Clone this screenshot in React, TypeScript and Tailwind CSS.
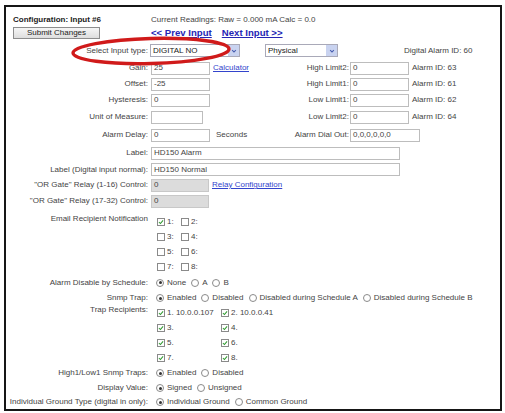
import type { ReactNode } from 'react';

/**
 * Pantalla de configuración de una entrada (Input #6) de un equipo de alarmas,
 * con el marco negro de la captura y la elipse roja que resalta "Select Input type".
 */

function TextBox({ value = '', w, gray = false }: { value?: string; w: string; gray?: boolean }) {
  return (
    <span
      className={`inline-flex h-[13px] items-center border px-[2px] text-[8px] leading-none ${w} ${
        gray ? 'border-[#c8c8c8] bg-[#dcdcdc]' : 'border-[#bdbdbd] bg-white'
      }`}
    >
      {value}
    </span>
  );
}

function Select({ value, w }: { value: string; w: string }) {
  return (
    <span className={`inline-flex h-[13px] items-center justify-between border border-[#a9a9b8] bg-white pl-[2px] ${w}`}>
      <span className="text-[8px] leading-none text-[#222]">{value}</span>
      <span className="flex h-[11px] w-[11px] items-center justify-center bg-[#c9d3f0]">
        <svg viewBox="0 0 8 8" className="h-[6px] w-[6px]">
          <path d="M1.5 2.8 L4 5.2 L6.5 2.8" fill="none" stroke="#4a5fb0" strokeWidth="1.4" />
        </svg>
      </span>
    </span>
  );
}

function Check({ on = false }: { on?: boolean }) {
  return (
    <span className="inline-flex h-[8px] w-[8px] shrink-0 items-center justify-center border border-[#8a8a8a] bg-white">
      {on && (
        <svg viewBox="0 0 8 8" className="h-[6px] w-[6px]">
          <path d="M1.2 4 L3.2 6 L6.8 1.8" fill="none" stroke="#2f9a2f" strokeWidth="1.4" />
        </svg>
      )}
    </span>
  );
}

function Radio({ on = false }: { on?: boolean }) {
  return (
    <span className="inline-flex h-[8px] w-[8px] shrink-0 items-center justify-center rounded-full border border-[#8a8a8a] bg-white">
      {on && <span className="h-[3px] w-[3px] rounded-full bg-[#333]" />}
    </span>
  );
}

function Row({ label, h, children }: { label: string; h: string; children: ReactNode }) {
  return (
    <div className={`flex items-center ${h}`}>
      <div className="w-[142px] shrink-0 whitespace-nowrap text-right">{label}</div>
      <div className="flex items-center pl-[3px]">{children}</div>
    </div>
  );
}

function PairRow({
  label,
  h,
  left,
  rightLabel,
  right,
}: {
  label: string;
  h: string;
  left: ReactNode;
  rightLabel: string;
  right: ReactNode;
}) {
  return (
    <div className={`flex items-center ${h}`}>
      <div className="w-[142px] shrink-0 whitespace-nowrap text-right">{label}</div>
      <div className="flex w-[142px] shrink-0 items-center pl-[3px]">{left}</div>
      <div className="w-[59px] shrink-0 whitespace-nowrap text-right">{rightLabel}</div>
      <div className="flex items-center pl-[1px]">{right}</div>
    </div>
  );
}

function Options({ items, selected }: { items: string[]; selected: number }) {
  return (
    <div className="flex items-center gap-[5px] pl-[5px]">
      {items.map((t, i) => (
        <span key={t} className="flex items-center gap-[3px] whitespace-nowrap">
          <Radio on={i === selected} />
          {t}
        </span>
      ))}
    </div>
  );
}

function CalcLink({ children }: { children: ReactNode }) {
  return <span className="text-[#3344cc] underline">{children}</span>;
}

export default function App() {
  const email = [
    ['1:', '2:'],
    ['3:', '4:'],
    ['5:', '6:'],
    ['7:', '8:'],
  ];
  const traps = [
    ['1. 10.0.0.107', '2. 10.0.0.41'],
    ['3.', '4.'],
    ['5.', '6.'],
    ['7.', '8.'],
  ];

  return (
    <div className="h-[413px] w-[505px] bg-white pl-[4px] pt-[5px] font-['Liberation_Sans',Arial,sans-serif] text-[8px] leading-none text-[#444]">
      <div className="relative h-[406px] w-[498px] border-2 border-[#161616] pt-[6px]">
        {/* Cabecera */}
        <div className="flex h-[14px] items-center">
          <div className="w-[142px] pl-[7px] font-bold text-[#222]">Configuration: Input #6</div>
          <div className="pl-[3px]">Current Readings: Raw = 0.000 mA Calc = 0.0</div>
        </div>
        <div className="flex h-[14px] items-start">
          <div className="w-[142px] pl-[7px]">
            <span className="flex h-[12px] w-[87px] items-center justify-center border border-[#8d8d8d] bg-gradient-to-b from-[#f6f6f6] to-[#dedede] text-[#222]">
              Submit Changes
            </span>
          </div>
          <div className="flex gap-[10px] pl-[3px] pt-[1px] text-[9.6px] font-bold text-[#2424b4] underline">
            <span>&lt;&lt; Prev Input</span>
            <span>Next Input &gt;&gt;</span>
          </div>
        </div>

        {/* Tipo de entrada */}
        <div className="flex h-[19px] items-center">
          <div className="w-[142px] whitespace-nowrap text-right">Select Input type:</div>
          <div className="flex items-center pl-[2px]">
            <Select value="DIGITAL NO" w="w-[90px]" />
            <span className="ml-[25px]">
              <Select value="Physical" w="w-[73px]" />
            </span>
            <span className="ml-[66px] whitespace-nowrap">Digital Alarm ID: 60</span>
          </div>
        </div>

        <PairRow
          label="Gain:"
          h="h-[16px]"
          left={
            <>
              <TextBox value="25" w="w-[59px]" />
              <span className="ml-[3px]">
                <CalcLink>Calculator</CalcLink>
              </span>
            </>
          }
          rightLabel="High Limit2:"
          right={
            <>
              <TextBox value="0" w="w-[59px]" />
              <span className="ml-[3px] whitespace-nowrap">Alarm ID: 63</span>
            </>
          }
        />
        <PairRow
          label="Offset:"
          h="h-[16px]"
          left={<TextBox value="-25" w="w-[59px]" />}
          rightLabel="High Limit1:"
          right={
            <>
              <TextBox value="0" w="w-[59px]" />
              <span className="ml-[3px] whitespace-nowrap">Alarm ID: 61</span>
            </>
          }
        />
        <PairRow
          label="Hysteresis:"
          h="h-[16px]"
          left={<TextBox value="0" w="w-[59px]" />}
          rightLabel="Low Limit1:"
          right={
            <>
              <TextBox value="0" w="w-[59px]" />
              <span className="ml-[3px] whitespace-nowrap">Alarm ID: 62</span>
            </>
          }
        />
        <PairRow
          label="Unit of Measure:"
          h="h-[18px]"
          left={<TextBox w="w-[52px]" />}
          rightLabel="Low Limit2:"
          right={
            <>
              <TextBox value="0" w="w-[59px]" />
              <span className="ml-[3px] whitespace-nowrap">Alarm ID: 64</span>
            </>
          }
        />
        <PairRow
          label="Alarm Delay:"
          h="h-[18px]"
          left={
            <>
              <TextBox value="0" w="w-[59px]" />
              <span className="ml-[6px]">Seconds</span>
            </>
          }
          rightLabel="Alarm Dial Out:"
          right={<TextBox value="0,0,0,0,0,0" w="w-[70px]" />}
        />

        <Row label="Label:" h="h-[18px]">
          <TextBox value="HD150 Alarm" w="w-[249px]" />
        </Row>
        <Row label="Label (Digital input normal):" h="h-[15px]">
          <TextBox value="HD150 Normal" w="w-[249px]" />
        </Row>
        <Row label={'"OR Gate" Relay (1-16) Control:'} h="h-[16px]">
          <TextBox value="0" w="w-[58px]" gray />
          <span className="ml-[3px]">
            <CalcLink>Relay Configuration</CalcLink>
          </span>
        </Row>
        <Row label={'"OR Gate" Relay (17-32) Control:'} h="h-[16px]">
          <TextBox value="0" w="w-[58px]" gray />
        </Row>

        {/* Notificación por correo */}
        <div className="flex">
          <div className="w-[142px] shrink-0 whitespace-nowrap pt-[6px] text-right">Email Recipient Notification</div>
          <div className="pl-[9px] pt-[5px]">
            {email.map(([a, b], i) => (
              <div key={a} className="flex h-[15px] items-center">
                <span className="flex w-[24px] items-center gap-[2px]">
                  <Check on={i === 0} />
                  {a}
                </span>
                <span className="flex items-center gap-[2px]">
                  <Check />
                  {b}
                </span>
              </div>
            ))}
          </div>
        </div>

        <Row label="Alarm Disable by Schedule:" h="h-[17px]">
          <Options items={['None', 'A', 'B']} selected={0} />
        </Row>
        <Row label="Snmp Trap:" h="h-[14px]">
          <Options
            items={['Enabled', 'Disabled', 'Disabled during Schedule A', 'Disabled during Schedule B']}
            selected={0}
          />
        </Row>

        {/* Destinatarios de traps */}
        <div className="flex">
          <div className="w-[142px] shrink-0 whitespace-nowrap pt-[1px] text-right">Trap Recipients:</div>
          <div className="pl-[9px]">
            {traps.map(([a, b]) => (
              <div key={a} className="flex h-[15px] items-center">
                <span className="flex w-[64px] items-center gap-[2px] whitespace-nowrap">
                  <Check on />
                  {a}
                </span>
                <span className="flex items-center gap-[2px] whitespace-nowrap">
                  <Check on />
                  {b}
                </span>
              </div>
            ))}
          </div>
        </div>

        <Row label="High1/Low1 Snmp Traps:" h="h-[16px]">
          <Options items={['Enabled', 'Disabled']} selected={0} />
        </Row>
        <Row label="Display Value:" h="h-[14px]">
          <Options items={['Signed', 'Unsigned']} selected={0} />
        </Row>
        <Row label="Individual Ground Type (digital in only):" h="h-[14px]">
          <Options items={['Individual Ground', 'Common Ground']} selected={0} />
        </Row>

        {/* Elipse roja de resaltado */}
        <svg className="pointer-events-none absolute left-[63px] top-[28px] h-[32px] w-[164px]" viewBox="0 0 164 32">
          <ellipse
            cx="82"
            cy="16"
            rx="78"
            ry="12.5"
            fill="none"
            stroke="#d01a1a"
            strokeWidth="3.4"
            transform="rotate(-1.5 82 16)"
          />
        </svg>
      </div>
    </div>
  );
}
